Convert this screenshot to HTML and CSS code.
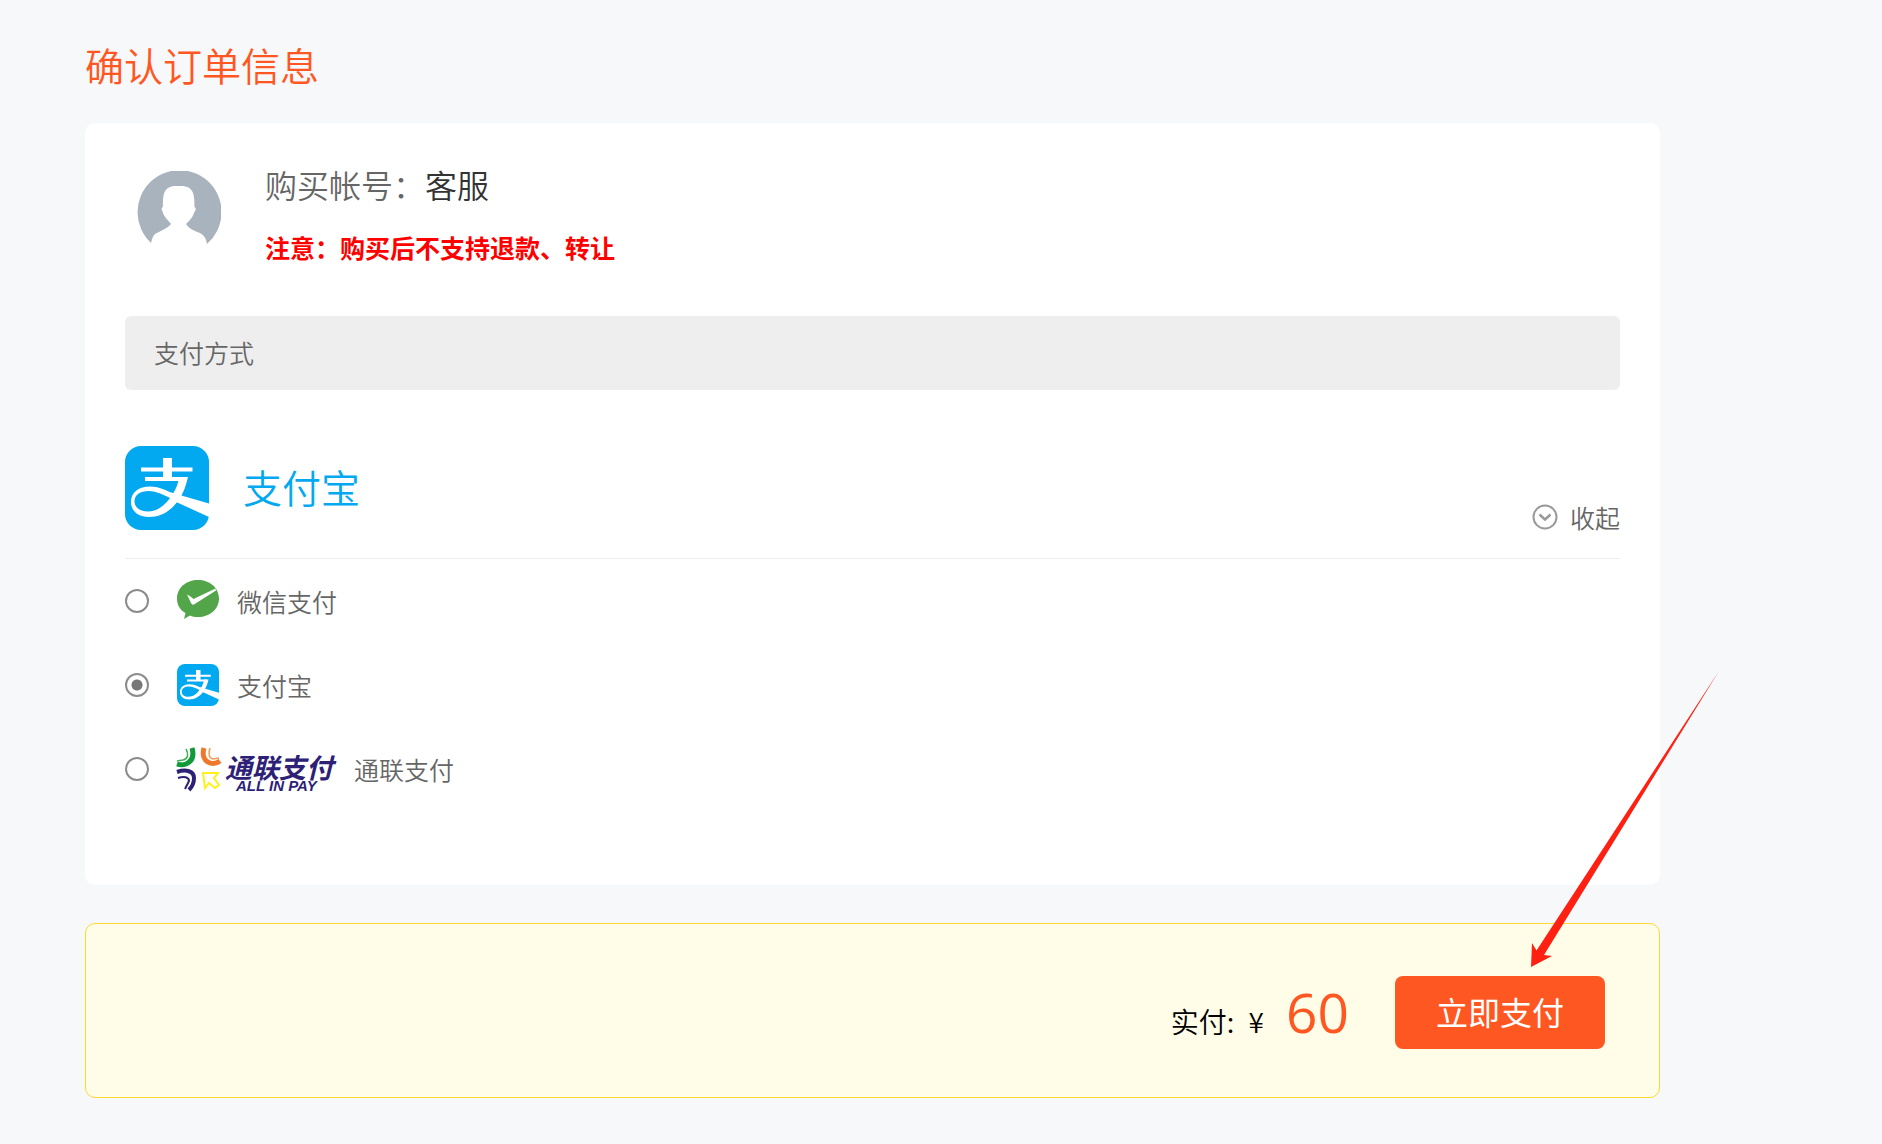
FILE: index.html
```html
<!DOCTYPE html>
<html lang="zh-CN">
<head>
    <meta charset="UTF-8">
    <meta name="viewport" content="width=device-width, initial-scale=1.0">
    <title>确认订单信息</title>
    <link rel="stylesheet" href="styles.css">
</head>
<body>
<!-- shared logo -->
<svg class="symbols" aria-hidden="true">
    <symbol id="alipay" viewBox="0 0 84 84">
        <rect width="84" height="84" rx="16" fill="#02a9f1"/>
        <path d="M38 12H47V32H38Z" fill="#fff"/>
        <path d="M16 23.5H67.500M20 33H60" fill="none" stroke="#fff" stroke-width="4"/>
        <path d="M54 31H63C61 40 58 48 53.500 54C46 65 36 71 24 71C12 71 6 64 6 56C6 46 14 40.500 25 40.500C33 40.500 41 44 48 47.500C51 43 53 38 54 31ZM45 52C37 48 30 45 24 45C15 45 9.500 49 9.500 55.500C9.500 61.500 15 65.500 23 65.500C32 65.500 39 60 45 52Z" fill="#fff" fill-rule="evenodd"/>
        <path d="M46 46.500L84 57.500V71L49 55Z" fill="#fff"/>
    </symbol>
</svg>

<div class="container">
    <h1 class="title">确认订单信息</h1>

    <div class="order-card">
        <div class="account">
            <svg class="avatar" viewBox="0 0 84 84" role="img" aria-label="头像">
                <path d="M14 72A42 42 0 1 1 70 73C69 68 68 65 63 62C58 60 52 58 49 53C53 49 56 46 57 42L59 38L57.500 36C57.500 24 57 15 44 15H39C26 15 26 25 26 35L24.500 38L26 42C28 47 31 49 34 53C30 58 23 60 18 63C15 66 15 69 14 72Z" fill="#a8b3be"/>
            </svg>
            <div>
                <p class="account-name">购买帐号：<span>客服</span></p>
                <p class="notice">注意：购买后不支持退款、转让</p>
            </div>
        </div>

        <h2 class="section-title">支付方式</h2>

        <div class="current">
            <svg class="current-logo" aria-hidden="true"><use href="#alipay"/></svg>
            <span class="current-name">支付宝</span>
            <button type="button" class="toggle">
                <svg class="toggle-icon" viewBox="0 0 26 26" aria-hidden="true">
                    <circle cx="13" cy="13" r="11.500" fill="none" stroke="#999" stroke-width="2"/>
                    <path d="M7.500 10.500L13 15.500L18.500 10.500" fill="none" stroke="#999" stroke-width="2.500"/>
                </svg>
                收起
            </button>
        </div>

        <div class="pay-list">
            <label class="pay-item">
                <input type="radio" name="pay" value="wechat">
                <svg class="pay-logo" viewBox="0 0 42 42" aria-hidden="true">
                    <path d="M21 0C33 0 42 8 42 18.500C42 29 33 37 21 37C18 37 15 36.500 13 35.500L7 39L8.500 33C3 30 0 25 0 18.500C0 8 9 0 21 0Z" fill="#52a549"/>
                    <path d="M10 14.500C12 15 14 17 16.500 19L38.500 8.500L39 10.500L17 24.500C15 25 14.500 24 14 23Z" fill="#fff"/>
                </svg>
                <span>微信支付</span>
            </label>
            <label class="pay-item">
                <input type="radio" name="pay" value="alipay" checked>
                <svg class="pay-logo" aria-hidden="true"><use href="#alipay"/></svg>
                <span>支付宝</span>
            </label>
            <label class="pay-item">
                <input type="radio" name="pay" value="allinpay">
                <svg class="pay-logo pay-logo-wide" viewBox="0 0 159 42" aria-hidden="true">
                    <g fill="none">
                        <path d="M15 0C17 7 16 13 9 16C6 17 3 17 0 16" stroke="#119a3a" stroke-width="5"/>
                        <path d="M9 1C12 6 11 11 6 12L0 13" stroke="#3fae58" stroke-width="1.500"/>
                        <path d="M27 0C25 7 27 13 33 15C36 16 39 16 43 13" stroke="#f0782d" stroke-width="5"/>
                        <path d="M33 0C31 6 32 10 36 11L42 10" stroke="#f29a56" stroke-width="1.500"/>
                        <path d="M0 24C9 21 17 23 17 30C17 35 15 39 12 42" stroke="#2d2177" stroke-width="4"/>
                        <path d="M1 30C7 28 12 29 12 33L8 41" stroke="#2d2177" stroke-width="2"/>
                        <path d="M26 25H41L37 30L42 37L38 40L32 35L28 40Z" stroke="#fff01c" stroke-width="2"/>
                    </g>
                    <text class="logo-cn" x="48" y="30">通联支付</text>
                    <text class="logo-en" x="59" y="43">ALL IN PAY</text>
                </svg>
                <span>通联支付</span>
            </label>
        </div>
    </div>

    <div class="pay-bar">
        <p class="total">实付: <span class="currency">¥</span> <strong>60</strong></p>
        <button type="submit" class="btn-pay">立即支付</button>
        <!-- pointer to the pay button -->
        <svg class="arrow" viewBox="0 0 188 296" aria-hidden="true">
            <path d="M0 296L1 272L5.500 279.500L188 0L13 284L21 285Z" fill="#ff2012"/>
        </svg>
    </div>
</div>
</body>
</html>
```

FILE: styles.css
```css
:root {
    --clr-main: #ff5722;
    --clr-text: #666;
    --clr-alipay: #02a9f1;
}

* {
    box-sizing: border-box;
}

body {
    margin: 0;
    background-color: #f7f8fa;
    color: var(--clr-text);
    font-family: "Noto Sans CJK SC", sans-serif;
    font-size: 25px;
    font-weight: 350;
    line-height: 36px;
}

h1, h2, p {
    margin: 0;
}

button {
    border: none;
    font: inherit;
    cursor: pointer;
}

.symbols {
    display: none;
}

.container {
    margin: 0 222px 0 85px;
    padding: 36px 0;
}

.title {
    margin-bottom: 31px;
    color: var(--clr-main);
    font-size: 39px;
    font-weight: 350;
    line-height: 56px;
}

/* Order card */
.order-card {
    padding: 40px 40px 95px;
    background-color: #fff;
    border-radius: 10px;
}

.account {
    display: flex;
    gap: 44px;
    padding: 0 12px;
}

.avatar {
    width: 84px;
    height: 84px;
    margin-top: 8px;
}

.account-name {
    margin-bottom: 24px;
    font-size: 32px;
    line-height: 42px;
}

.account-name span {
    color: #333;
}

.notice {
    color: #f00;
    font-weight: 700;
}

.section-title {
    margin-top: 51px;
    padding: 18px 29px 20px;
    background-color: #eee;
    border-radius: 6px;
    font-size: 25px;
    font-weight: 350;
}

/* Selected method */
.current {
    display: flex;
    align-items: center;
    margin-top: 56px;
    padding-bottom: 28px;
    border-bottom: 1px solid #eee;
}

.current-logo {
    width: 84px;
    height: 84px;
    margin-right: 34px;
}

.current-name {
    padding-bottom: 4px;
    color: var(--clr-alipay);
    font-size: 39px;
    line-height: 56px;
}

.toggle {
    display: flex;
    align-items: center;
    align-self: flex-end;
    gap: 12px;
    margin-left: auto;
    padding: 0;
    background: none;
    color: var(--clr-text);
    line-height: 26px;
}

.toggle-icon {
    width: 26px;
    height: 26px;
}

/* Payment list */
.pay-list {
    display: flex;
    flex-direction: column;
    gap: 42px;
    padding-top: 21px;
}

.pay-item {
    display: flex;
    align-items: center;
    height: 42px;
    cursor: pointer;
}

.pay-item input {
    appearance: none;
    width: 24px;
    height: 24px;
    margin: 0 28px 0 0;
    border: 2px solid #8c8c8c;
    border-radius: 50%;
}

.pay-item input:checked {
    background: radial-gradient(circle, #777 5px, #fff 6px);
}

.pay-logo {
    width: 42px;
    height: 42px;
    margin-right: 18px;
}

.pay-logo-wide {
    width: 159px;
    overflow: visible;
}

.logo-cn {
    fill: #2d2177;
    font-size: 27px;
    font-style: italic;
    font-weight: 700;
}

.logo-en {
    fill: #2d2177;
    font-family: "Liberation Sans", sans-serif;
    font-size: 15px;
    font-style: italic;
    font-weight: 700;
}

/* Pay bar */
.pay-bar {
    position: relative;
    display: flex;
    justify-content: flex-end;
    align-items: center;
    gap: 46px;
    margin-top: 38px;
    padding: 52px 54px 48px;
    background-color: #fffde7;
    border: 1px solid #fdd835;
    border-radius: 10px;
}

.total {
    padding-top: 8px;
    color: #000;
    font-size: 28px;
    line-height: 36px;
}

.currency {
    margin-left: 8px;
}

.total strong {
    margin-left: 16px;
    color: var(--clr-main);
    font-family: "Open Sans", sans-serif;
    font-size: 55px;
    font-weight: 400;
}

.btn-pay {
    padding: 11px 41px 13px;
    background-color: var(--clr-main);
    border-radius: 8px;
    color: #fff;
    font-size: 32px;
    font-weight: 400;
    line-height: 49px;
}

.arrow {
    position: absolute;
    top: -253px;
    right: -60px;
    width: 188px;
    height: 296px;
    pointer-events: none;
}
```
